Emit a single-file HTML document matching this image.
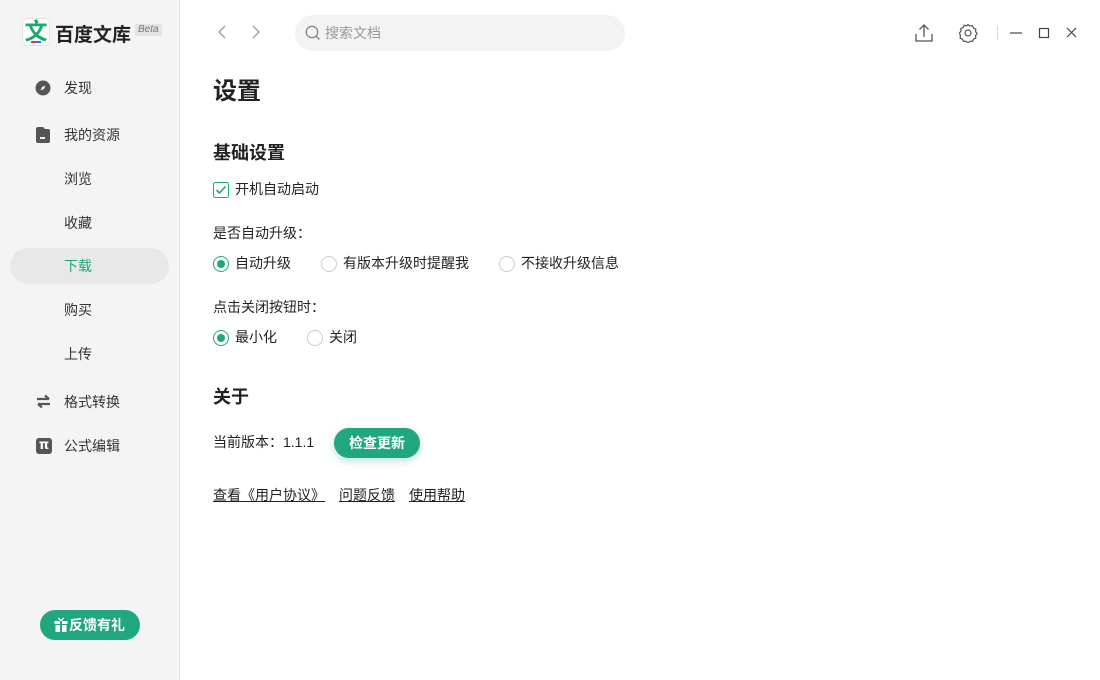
<!DOCTYPE html>
<html><head><meta charset="utf-8"><style>
*{margin:0;padding:0;box-sizing:border-box}
body{width:1100px;height:680px;overflow:hidden;background:#fff;font-family:"Liberation Sans","Noto Sans CJK SC",sans-serif;color:#222;position:relative;font-size:14px}
.side{position:absolute;left:0;top:0;width:180px;height:680px;background:#f4f4f4;border-right:1px solid #e6e6e6}
.abs{position:absolute}
.nav{position:absolute;left:64px;font-size:14px;color:#333}
.main .abs{white-space:nowrap}
.radio{position:absolute;width:16px;height:16px;border:1px solid #ccc;border-radius:50%}
.radio.on{border-color:#21a77e}
.radio.on:after{content:"";position:absolute;left:3px;top:3px;width:8px;height:8px;border-radius:50%;background:#21a77e}
a{color:#222;text-decoration:underline}
</style></head><body>
<div class="side">
  <div class="abs" style="left:22px;top:18px;width:28px;height:28px;background:#fff;border:1px solid #e2e2e2;border-radius:5px;text-align:center;font-size:23px;line-height:24px;color:#1aaa6f;font-weight:bold;overflow:hidden">文<div style="position:absolute;left:8px;bottom:2px;width:5px;height:2px;background:#e33"></div><div style="position:absolute;left:13px;bottom:2px;width:5px;height:2px;background:#36f"></div></div>
  <div class="abs" style="left:55px;top:20px;font-size:19px;font-weight:bold;color:#222;letter-spacing:0px">百度文库</div>
  <div class="abs" style="left:135px;top:24px;font-size:10px;font-style:italic;color:#777;background:#e3e3e3;padding:0 3px;border-radius:2px;line-height:12px">Beta</div>
  <svg class="abs" style="left:35px;top:80px" width="16" height="16" viewBox="0 0 16 16"><circle cx="8" cy="8" r="7.5" fill="#555"/><path d="M10.5 5.5L9 9 5.5 10.5 7 7z" fill="#f4f4f4"/></svg>
  <div class="nav" style="top:78px">发现</div>
  <svg class="abs" style="left:36px;top:127px" width="14" height="16" viewBox="0 0 14 16"><path d="M0 2a2 2 0 0 1 2-2h5l2 2h3a2 2 0 0 1 2 2v10a2 2 0 0 1-2 2H2a2 2 0 0 1-2-2z" fill="#555"/><rect x="4" y="10" width="5" height="2" fill="#f4f4f4"/></svg>
  <div class="nav" style="top:125px">我的资源</div>
  <div class="nav" style="top:169px">浏览</div>
  <div class="nav" style="top:213px">收藏</div>
  <div class="abs" style="left:10px;top:248px;width:159px;height:36px;background:#e8e8e8;border-radius:18px"></div>
  <div class="nav" style="top:256px;color:#21a77e">下载</div>
  <div class="nav" style="top:300px">购买</div>
  <div class="nav" style="top:344px">上传</div>
  <svg class="abs" style="left:36px;top:394px" width="15" height="15" viewBox="0 0 15 15"><path d="M1 5h12M9 1.5l4 3.5M14 10H2M6 13.5L2 10" stroke="#555" stroke-width="2.2" fill="none"/></svg>
  <div class="nav" style="top:392px">格式转换</div>
  <div class="abs" style="left:36px;top:438px;width:16px;height:16px;background:#555;border-radius:3px;color:#fff;font-size:13px;font-weight:bold;text-align:center;line-height:16px;font-family:'DejaVu Sans',sans-serif">π</div>
  <div class="nav" style="top:436px">公式编辑</div>
  <div class="abs" style="left:40px;top:610px;width:100px;height:30px;background:#21a77e;border-radius:15px;color:#fff;font-size:14px;font-weight:bold;line-height:30px;padding-left:29px">反馈有礼</div>
  <svg class="abs" style="left:54px;top:617px" width="14" height="15" viewBox="0 0 14 15"><path d="M4 1.5c1.5 0 3 2.5 3 2.5s1.5-2.5 3-2.5" stroke="#fff" stroke-width="1.4" fill="none"/><rect x="0.5" y="4" width="13" height="3" fill="#fff"/><rect x="1.5" y="8" width="11" height="7" fill="#fff"/><rect x="6" y="4" width="2" height="11" fill="#21a77e"/></svg>
</div>
<div class="main">
  <svg class="abs" style="left:216px;top:25px" width="46" height="14" viewBox="0 0 46 14"><path d="M9 1L3 7l6 6M37 1l6 6-6 6" stroke="#999" stroke-width="1.3" fill="none"/></svg>
  <div class="abs" style="left:295px;top:15px;width:330px;height:36px;background:#f3f3f3;border-radius:18px"></div>
  <svg class="abs" style="left:305px;top:25px" width="16" height="16" viewBox="0 0 16 16"><circle cx="7" cy="7" r="5.7" stroke="#888" stroke-width="1.3" fill="none"/><path d="M11 11l3.5 3.5" stroke="#888" stroke-width="1.3"/></svg>
  <div class="abs" style="left:325px;top:23px;font-size:14px;color:#999">搜索文档</div>
  <svg class="abs" style="left:914px;top:23px" width="20" height="20" viewBox="0 0 20 20"><path d="M10 14V2M5.5 6.5L10 2l4.5 4.5M2 11v7h16v-7" stroke="#555" stroke-width="1.3" fill="none"/></svg>
  <svg class="abs" style="left:958px;top:23px" width="20" height="20" viewBox="0 0 20 20"><path d="M10 1.5l2 1.5 2.5-.2 1 2.3 2.3 1-.2 2.5 1.5 2-1.5 2 .2 2.5-2.3 1-1 2.3-2.5-.2-2 1.5-2-1.5-2.5.2-1-2.3-2.3-1 .2-2.5L1.5 10 3 8l-.2-2.5 2.3-1 1-2.3L8.5 3z" stroke="#555" stroke-width="1.2" fill="none"/><circle cx="10" cy="10" r="3" stroke="#555" stroke-width="1.2" fill="none"/></svg>
  <div class="abs" style="left:997px;top:26px;width:1px;height:14px;background:#ddd"></div>
  <svg class="abs" style="left:1008px;top:26px" width="72" height="14" viewBox="0 0 72 14"><path d="M2 7h12" stroke="#444" stroke-width="1.2"/><rect x="31.5" y="2.5" width="9" height="9" stroke="#444" stroke-width="1.2" fill="none"/><path d="M59 2l9 9M68 2l-9 9" stroke="#444" stroke-width="1.2"/></svg>

  <div class="abs" style="left:213px;top:71px;font-size:24px;font-weight:bold">设置</div>
  <div class="abs" style="left:213px;top:139px;font-size:18px;font-weight:bold">基础设置</div>
  <svg class="abs" style="left:213px;top:182px" width="16" height="16" viewBox="0 0 16 16"><rect x=".5" y=".5" width="15" height="15" rx="2" stroke="#21a77e" fill="none"/><path d="M3.5 8l3 3 6-6.5" stroke="#21a77e" stroke-width="1.6" fill="none"/></svg>
  <div class="abs" style="left:235px;top:179px">开机自动启动</div>
  <div class="abs" style="left:213px;top:223px">是否自动升级：</div>
  <div class="radio on" style="left:213px;top:256px"></div><div class="abs" style="left:235px;top:253px">自动升级</div>
  <div class="radio" style="left:321px;top:256px"></div><div class="abs" style="left:343px;top:253px">有版本升级时提醒我</div>
  <div class="radio" style="left:499px;top:256px"></div><div class="abs" style="left:521px;top:253px">不接收升级信息</div>
  <div class="abs" style="left:213px;top:297px">点击关闭按钮时：</div>
  <div class="radio on" style="left:213px;top:330px"></div><div class="abs" style="left:235px;top:327px">最小化</div>
  <div class="radio" style="left:307px;top:330px"></div><div class="abs" style="left:329px;top:327px">关闭</div>
  <div class="abs" style="left:213px;top:383px;font-size:18px;font-weight:bold">关于</div>
  <div class="abs" style="left:213px;top:432px">当前版本：1.1.1</div>
  <div class="abs" style="left:334px;top:428px;width:86px;height:30px;border-radius:15px;background:#21a77e;color:#fff;font-weight:bold;text-align:center;line-height:30px;box-shadow:0 3px 8px rgba(33,167,126,.3)">检查更新</div>
  <div class="abs" style="left:213px;top:485px"><a>查看《用户协议》</a></div>
  <div class="abs" style="left:339px;top:485px"><a>问题反馈</a></div>
  <div class="abs" style="left:409px;top:485px"><a>使用帮助</a></div>
</div>
</body></html>
